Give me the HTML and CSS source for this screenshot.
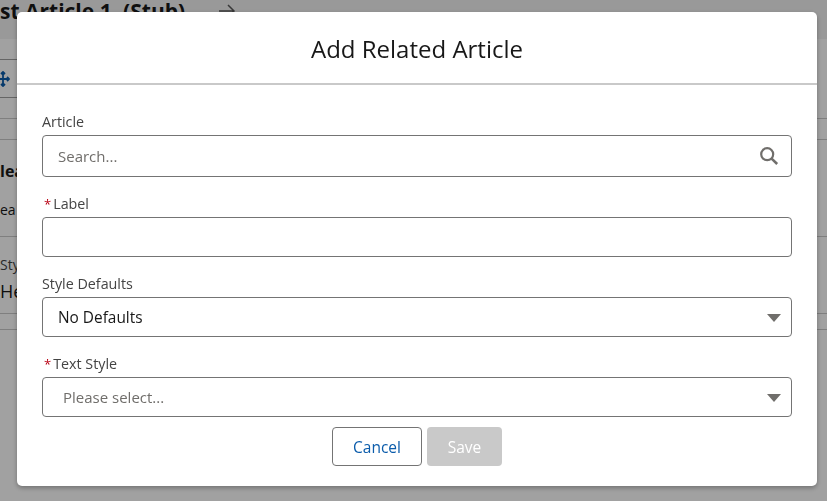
FILE: index.html
```html
<!DOCTYPE html>
<html lang="en">
<head>
  <meta charset="UTF-8">
  <meta name="viewport" content="width=device-width, initial-scale=1.0">
  <title>Add Related Article</title>
  <link rel="stylesheet" href="styles.css">
</head>
<body>
<div class="page">
  <div class="page-title">
    <h2>st Article 1. (Stub)</h2>
    <svg class="title-arrow" width="18" height="14" viewBox="0 0 18 14"><path d="M1 7h15M10 1l6 6-6 6" fill="none" stroke="#5a5a5a" stroke-width="1.5"/></svg>
  </div>
  <div class="page-toolbar">
    <svg class="move-icon" width="14" height="16" viewBox="0 0 14 16"><path d="M7 1v14M1 8h12M5 3l2-2 2 2M5 13l2 2 2-2M3 6L1 8l2 2M11 6l2 2-2 2" fill="none" stroke="#0B5CAB" stroke-width="1.8"/></svg>
  </div>
  <div class="page-row"></div>
  <div class="page-row"></div>
  <div class="page-section">
    <h3>lea</h3>
    <p>ea</p>
  </div>
  <div class="page-style">
    <span class="style-label">Style</span>
    <span class="style-value">Hea</span>
  </div>
  <div class="page-end"></div>
</div>

<div class="backdrop"></div>

<div class="modal">
  <div class="modal-header">Add Related Article</div>
  <form class="modal-body">
    <div class="form-row">
      <label>Article</label>
      <div class="control search">
        <span class="placeholder">Search...</span>
        <svg class="search-icon" width="20" height="20" viewBox="0 0 20 20"><circle cx="8.2" cy="8.2" r="6" fill="none" stroke="#706e6b" stroke-width="2.2"/><path d="M12.6 12.6l5.6 5.4" fill="none" stroke="#706e6b" stroke-width="2.6"/></svg>
      </div>
    </div>
    <div class="form-row">
      <label><abbr>*</abbr>Label</label>
      <div class="control"></div>
    </div>
    <div class="form-row">
      <label>Style Defaults</label>
      <div class="control select">
        <span class="value">No Defaults</span>
        <span class="caret"></span>
      </div>
    </div>
    <div class="form-row">
      <label><abbr>*</abbr>Text Style</label>
      <div class="control select">
        <span class="placeholder indent">Please select...</span>
        <span class="caret"></span>
      </div>
    </div>
    <div class="buttons">
      <button type="button" class="btn-cancel">Cancel</button>
      <button type="button" class="btn-save">Save</button>
    </div>
  </form>
</div>
</body>
</html>
```

FILE: styles.css
```css
html, body {
  height: 100%;
}
body {
  margin: 0;
  overflow: hidden;
  background-color: #FFFFFF;
  color: #181818;
  font-family: "Open Sans", "Noto Sans", sans-serif;
  font-size: 15px;
}
.page {
  display: flex;
  flex-direction: column;
}
.page-title {
  display: flex;
  align-items: flex-start;
  gap: 33px;
  height: 39px;
  background-color: #F3F3F3;
}
.page-title h2 {
  margin: -2px 0 0;
  font-size: 21px;
  line-height: 26px;
  font-weight: 700;
}
.title-arrow {
  margin-top: 4px;
}
.page-toolbar {
  width: 200px;
  height: 39px;
  box-sizing: border-box;
  margin-top: 20px;
  border-top: 1px solid #A0A0A0;
  border-bottom: 1px solid #A0A0A0;
  display: flex;
  align-items: center;
}
.move-icon {
  margin-left: -4px;
}
.page-row {
  height: 21px;
  box-sizing: border-box;
  border-bottom: 1px solid #C9C9C9;
}
.page-section {
  height: 97px;
  box-sizing: border-box;
  padding-top: 19px;
  border-bottom: 1px solid #C9C9C9;
}
.page-section h3 {
  margin: 0;
  font-size: 16px;
  line-height: 24px;
  font-weight: 700;
}
.page-section p {
  margin: 17px 0 0;
  line-height: 20px;
  font-size: 14px;
}
.page-style {
  height: 77px;
  box-sizing: border-box;
  padding-top: 18px;
  border-bottom: 1px solid #C9C9C9;
  display: flex;
  flex-direction: column;
  gap: 4px;
}
.style-label {
  font-size: 14px;
  line-height: 20px;
  color: #444444;
}
.style-value {
  font-size: 18px;
  line-height: 24px;
}
.page-end {
  height: 16px;
  box-sizing: border-box;
  border-bottom: 1px solid #C9C9C9;
}
.backdrop {
  position: fixed;
  top: 0;
  right: 0;
  bottom: 0;
  left: 0;
  background-color: rgba(0, 0, 0, 0.37);
}
.modal {
  position: fixed;
  top: 12px;
  left: 17px;
  width: 800px;
  height: 474px;
  background-color: #FFFFFF;
  border-radius: 5px;
  box-shadow: 0 2px 5px rgba(0, 0, 0, 0.3);
}
.modal-header {
  height: 73px;
  box-sizing: border-box;
  padding-top: 2px;
  border-bottom: 2px solid #C9C9C9;
  display: flex;
  align-items: center;
  justify-content: center;
  font-size: 24px;
  color: #181818;
}
.modal-body {
  padding: 26px 25px 0;
  display: flex;
  flex-direction: column;
}
.form-row {
  display: flex;
  flex-direction: column;
  margin-bottom: 16px;
}
label {
  color: #444444;
  font-size: 14.3px;
  line-height: 22px;
  margin-bottom: 2px;
}
abbr {
  color: #BA0517;
  font-size: 13px;
  margin: 0 2px;
}
.control {
  height: 40px;
  box-sizing: border-box;
  border: 1px solid #747474;
  border-radius: 4px;
  display: flex;
  align-items: center;
  justify-content: space-between;
  padding: 0 15px;
}
.search {
  height: 42px;
  padding-right: 12px;
}
.placeholder {
  color: #706E6B;
}
.indent {
  padding-left: 5px;
}
.value {
  color: #181818;
  font-size: 15.4px;
}
.caret {
  width: 0;
  height: 0;
  margin: 2px -5px 0 0;
  border-left: 7px solid transparent;
  border-right: 7px solid transparent;
  border-top: 8px solid #706E6B;
}
.buttons {
  display: flex;
  justify-content: center;
  gap: 5px;
  margin-top: -6px;
}
button {
  height: 39px;
  border-radius: 4px;
  font-family: inherit;
  font-size: 15.5px;
}
.btn-cancel {
  width: 90px;
  background-color: #FFFFFF;
  border: 1px solid #747474;
  color: #0B5CAB;
}
.btn-save {
  width: 75px;
  background-color: #C9C9C9;
  border: none;
  color: #FFFFFF;
}
```
